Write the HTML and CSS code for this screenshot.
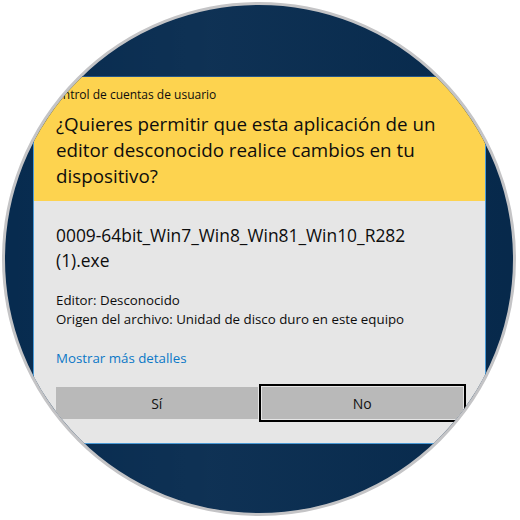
FILE: index.html
```html
<!doctype html>
<html lang="es">
<head>
  <title>Control de cuentas de usuario</title>
  <meta charset="utf-8">
  <meta name="viewport" content="width=device-width">
<link rel="stylesheet" href="styles.css">
</head>
<body>

<div class="lens">
  <div class="uac">
    <div class="uac-head">
      <div class="uac-caption">Control de cuentas de usuario</div>
      <div class="uac-title">¿Quieres permitir que esta aplicación de un editor desconocido realice cambios en tu dispositivo?</div>
    </div>
    <div class="uac-body">
      <div class="uac-file">0009-64bit_Win7_Win8_Win81_Win10_R282 (1).exe</div>
      <div class="uac-info">
        <div>Editor: Desconocido</div>
        <div>Origen del archivo: Unidad de disco duro en este equipo</div>
      </div>
      <a class="uac-more" href="#">Mostrar más detalles</a>
      <div class="uac-buttons">
        <button type="button">Sí</button>
        <button type="button" class="focused">No</button>
      </div>
    </div>
  </div>
</div>

</body>
</html>
```

FILE: styles.css
```css
:root {
  --navy: #072b4f;
  --yellow: #fdd34f;
  --panel: #e6e6e6;
  --button: #b9b9b9;
  --link: #0b78c6;
}
html {
  box-sizing: border-box;
  font-family: "Open Sans", "Noto Sans", sans-serif;
}
*, *:before, *:after {
  box-sizing: inherit;
}
body {
  margin: 0;
  background: #fff;
  color: #0d0d0d;
}
.lens {
  width: 514px;
  height: 514px;
  margin: 2px;
  border: 3px solid #c4c4c6;
  border-radius: 50%;
  overflow: hidden;
  padding: 71px 0 0 28px;
  background:
    linear-gradient(90deg, rgba(255,255,255,0) 0, rgba(255,255,255,.03) 40%, rgba(0,0,0,.05) 100%),
    var(--navy);
}
.uac {
  width: 453px;
  border: 1px solid #4a9ad6;
  border-top-color: #24568a;
}
.uac-head {
  background: var(--yellow);
  padding: 10px 23px 12px 22px;
}
.uac-caption {
  margin-left: -8px;
  font-size: 12px;
  line-height: 16px;
}
.uac-title {
  margin-top: 8px;
  font-size: 18.8px;
  line-height: 26px;
}
.uac-body {
  background: var(--panel);
  padding: 22px 22px 24px;
}
.uac-file {
  max-width: 380px;
  font-size: 17.4px;
  line-height: 25px;
}
.uac-info {
  margin-top: 18px;
  font-size: 13.3px;
  line-height: 19px;
}
.uac-more {
  display: block;
  margin-top: 20px;
  font-size: 13.3px;
  line-height: 19px;
  color: var(--link);
  text-decoration: none;
}
.uac-buttons {
  display: grid;
  grid-template-columns: 1fr 1fr;
  gap: 4px;
  margin-top: 19px;
}
.uac-buttons button {
  height: 32px;
  border: 0;
  border-radius: 0;
  background: var(--button);
  font: inherit;
  font-size: 14px;
  color: #111;
}
.uac-buttons .focused {
  outline: 2px solid #000;
  outline-offset: 1px;
}
```
